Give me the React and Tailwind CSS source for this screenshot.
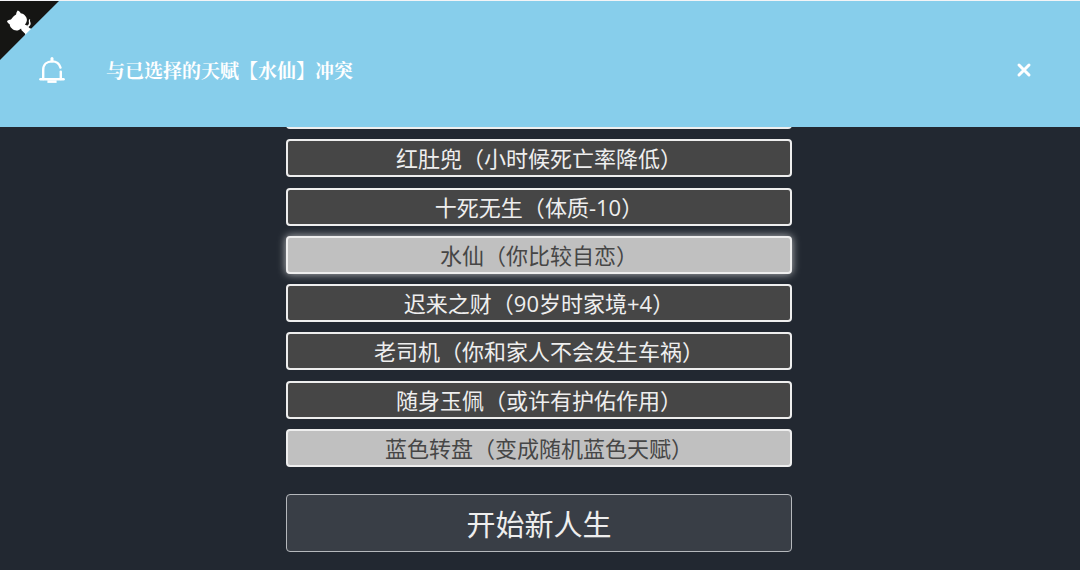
import { useState } from 'react';

const TALENTS = [
  { id: 1, name: '红肚兜', description: '小时候死亡率降低' },
  { id: 2, name: '十死无生', description: '体质-10' },
  { id: 3, name: '水仙', description: '你比较自恋' },
  { id: 4, name: '迟来之财', description: '90岁时家境+4' },
  { id: 5, name: '老司机', description: '你和家人不会发生车祸' },
  { id: 6, name: '随身玉佩', description: '或许有护佑作用' },
  { id: 7, name: '蓝色转盘', description: '变成随机蓝色天赋' },
];

const BellIcon = () => (
  <svg className="h-7 w-7" viewBox="0 0 28 28" fill="none" stroke="currentColor" aria-hidden="true">
    <path strokeWidth="3" strokeLinecap="round" d="M14 2.6V5" />
    <path strokeWidth="2.4" strokeLinecap="round" d="M5.2 23V14C5.2 8.6 9 5.4 14 5.4C18.2 5.4 21.4 7.8 22.5 11.6" />
    <path strokeWidth="2.4" strokeLinecap="round" d="M22.8 15.6V23" />
    <path strokeWidth="2.4" strokeLinecap="round" d="M2.4 23.2H25.6" />
    <path strokeWidth="2.6" d="M9.4 25.6H18.6" />
  </svg>
);

const CloseIcon = () => (
  <svg className="h-4 w-4" viewBox="0 0 16 16" fill="none" stroke="currentColor" aria-hidden="true">
    <path strokeWidth="3" strokeLinecap="round" d="M3 3L13 13M13 3L3 13" />
  </svg>
);

const GithubCorner = () => (
  <a href="#" aria-label="GitHub" className="absolute -left-px top-px z-20">
    <svg className="h-[60px] w-[60px] -scale-x-100 text-white" viewBox="0 0 250 250" fill="#151513" aria-hidden="true">
      <path d="M0,0 L115,115 L130,115 L142,142 L250,250 L250,0 Z" />
      <path
        fill="currentColor"
        d="M128.3,109.0 C113.8,99.7 119.0,89.6 119.0,89.6 C122.0,82.7 120.5,78.6 120.5,78.6 C119.2,72.0 123.4,76.3 123.4,76.3 C127.3,80.9 125.5,87.3 125.5,87.3 C122.9,97.6 130.6,101.9 134.4,103.2"
      />
      <path
        fill="currentColor"
        d="M115.0,115.0 C114.9,115.1 118.7,116.5 119.8,115.4 L133.7,101.6 C136.9,99.2 139.9,98.4 142.2,98.6 C133.8,88.0 127.5,74.4 143.8,58.0 C148.5,53.4 154.0,51.2 159.7,51.0 C160.3,49.4 163.2,43.6 171.4,40.1 C171.4,40.1 176.1,42.5 178.8,56.2 C183.1,58.6 187.2,61.8 190.9,65.4 C194.5,69.0 197.7,73.2 200.1,77.6 C213.8,80.2 216.3,84.9 216.3,84.9 C212.7,93.1 206.9,96.0 205.4,96.6 C205.1,102.4 203.0,107.8 198.3,112.5 C181.9,128.9 168.3,122.5 157.7,114.1 C157.9,116.9 156.7,120.9 152.7,124.9 L141.0,136.5 C139.8,137.7 141.6,141.9 141.8,141.8 Z"
      />
    </svg>
  </a>
);

const Notice = ({ message, onClose }) => (
  <div
    role="alert"
    className="absolute inset-x-0 top-0 z-10 flex items-center border-t border-gray-100 bg-[#87ceeb] pb-[43px] pl-[38px] pr-12 pt-[55px] text-white"
  >
    <BellIcon />
    <p className="ml-10 flex-1 font-['Noto_Serif_CJK_SC','Noto_Sans_CJK_SC',serif] text-[19px] font-bold leading-7">
      {message}
    </p>
    <button type="button" aria-label="关闭" onClick={onClose} className="cursor-pointer">
      <CloseIcon />
    </button>
  </div>
);

const TalentItem = ({ talent, selected, glowing, onToggle }) => (
  <li>
    <button
      type="button"
      aria-pressed={selected}
      onClick={() => onToggle(talent.id)}
      className={`block h-[38px] w-full cursor-pointer rounded-[4px] border-2 border-[#eeeeee] text-[22px] leading-[34px] ${
        selected ? 'bg-[#c0c0c0] text-[#464646]' : 'bg-[#464646] text-[#eeeeee]'
      } ${glowing ? 'shadow-[0_0_8px_rgba(255,255,255,0.7)]' : ''}`}
    >
      {talent.name}（{talent.description}）
    </button>
  </li>
);

export default function App() {
  const [selectedIds, setSelectedIds] = useState([3, 7]);
  const [activeId, setActiveId] = useState(3);
  const [showNotice, setShowNotice] = useState(true);

  const toggleTalent = (id) => {
    setActiveId(id);
    setSelectedIds((ids) => (ids.includes(id) ? ids.filter((i) => i !== id) : [...ids, id]));
  };

  return (
    <div className="relative flex min-h-screen flex-col items-center bg-[#222831] pb-[18px] pr-0.5 pt-[91px] font-['Open_Sans','Noto_Sans_CJK_SC',sans-serif]">
      <GithubCorner />
      {showNotice && (
        <Notice message="与已选择的天赋【水仙】冲突" onClose={() => setShowNotice(false)} />
      )}

      <ul className="flex w-full max-w-[506px] flex-1 flex-col justify-between gap-2">
        <li aria-hidden="true" className="h-[38px] rounded-[4px] border-2 border-[#eeeeee] bg-[#464646]" />
        {TALENTS.map((talent) => (
          <TalentItem
            key={talent.id}
            talent={talent}
            selected={selectedIds.includes(talent.id)}
            glowing={talent.id === activeId}
            onToggle={toggleTalent}
          />
        ))}
      </ul>

      <button
        type="button"
        className="mt-[27px] h-[58px] w-full max-w-[506px] cursor-pointer rounded-[4px] border border-[#b5b8bc] bg-[#393e46] pt-1 text-[29px] leading-[52px] text-[#eeeeee]"
      >
        开始新人生
      </button>
    </div>
  );
}
